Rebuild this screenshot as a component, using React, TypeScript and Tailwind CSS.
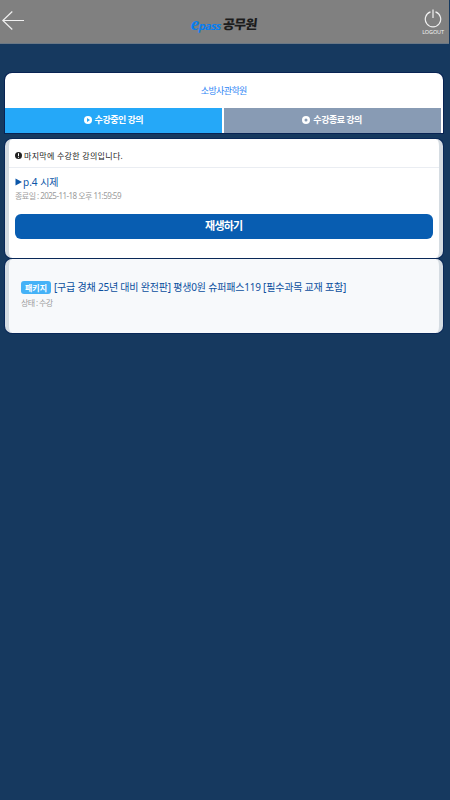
import React, { useState } from 'react';

type Tab = 'ongoing' | 'finished';

interface TabItem {
  id: Tab;
  label: string;
}

const TABS: TabItem[] = [
  { id: 'ongoing', label: '수강중인 강의' },
  { id: 'finished', label: '수강종료 강의' },
];

function TabIcon({ id }: { id: Tab }) {
  return (
    <svg viewBox="0 0 8 8" className="w-2 h-2 shrink-0">
      <circle cx="4" cy="4" r="4" fill="#fff" />
      {id === 'ongoing' ? (
        <path d="M3 2.1 L6 4 L3 5.9 Z" fill="#25a8f8" />
      ) : (
        <circle cx="4" cy="4" r="1.5" fill="#889bb4" />
      )}
    </svg>
  );
}

function Header() {
  return (
    <header className="w-[449px] h-11 bg-[#808080] border-b border-[#6b7885] flex items-start justify-between">
      <button type="button" aria-label="뒤로" className="pt-[11px] pl-[2px] w-[60px]">
        <svg viewBox="0 0 22 19" className="w-[22px] h-[19px]" fill="none" stroke="#f0f0f0" strokeWidth="1.2">
          <path d="M10.3 0.5 L0.8 9.5 L10.3 18.5 M0.8 9.5 H22" />
        </svg>
      </button>
      <div className="flex items-center h-[47px] -ml-px whitespace-nowrap">
        <span className="flex items-baseline h-[19px] leading-[19px] font-['Noto_Sans'] font-bold text-[11px] tracking-[-0.7px] text-[#087ef0]">
          <span className="text-[19px] leading-[19px] italic font-['Liberation_Serif']">e</span>
          <span className="-skew-x-12">pass</span>
        </span>
        <span className="ml-[3px] -skew-x-6 font-['Noto_Sans_CJK_KR'] font-black text-[13px] tracking-[-0.7px] text-[#1c1c1c]">공무원</span>
      </div>
      <button type="button" className="w-[60px] pr-[5px] pt-[9px] flex flex-col items-end">
        <svg viewBox="0 0 18 19" className="w-[18px] h-[19px] mr-[2px]" fill="none" stroke="#f0f0f0" strokeWidth="1.2">
          <path d="M6.5 2.9 A7.7 7.7 0 1 0 11.5 2.9" />
          <path d="M9 0.5 V9" />
        </svg>
        <span className="mt-[1px] h-[6px] leading-[6px] font-['Noto_Sans'] text-[5.5px] tracking-[-0.1px] text-[#f0f0f0]">LOGOUT</span>
      </button>
    </header>
  );
}

export default function App() {
  const [tab, setTab] = useState<Tab>('ongoing');

  return (
    <div className="w-[450px] h-[800px] overflow-hidden bg-[#16395f] font-['Noto_Sans','Noto_Sans_CJK_KR',sans-serif]">
      <Header />

      <main className="mt-[29px] ml-[5px] w-[437.5px] flex flex-col">
        <section className="h-[60px] bg-white rounded-t-[7px] shadow-[0_0_0_1px_#082353] overflow-hidden">
          <h1 className="h-[35px] flex items-center justify-center text-[9px] tracking-[-0.6px] text-[#2e86f5] whitespace-nowrap">
            소방사관학원
          </h1>
          <nav className="flex h-[25px] gap-[2px] pr-[2px]">
            {TABS.map(item => (
              <button
                key={item.id}
                type="button"
                onClick={() => setTab(item.id)}
                className={`flex-1 pb-[2px] flex items-center justify-center gap-[3px] text-white text-[9px] font-bold tracking-[-0.5px] whitespace-nowrap ${item.id === 'ongoing' ? 'bg-[#25a8f8]' : 'bg-[#889bb4]'}`}
                aria-pressed={tab === item.id}
              >
                <TabIcon id={item.id} />
                <span>{item.label}</span>
              </button>
            ))}
          </nav>
        </section>

        <section className="mt-[6px] h-[118.5px] bg-white rounded-[7px] border-x-4 border-[#d5dce2] shadow-[0_0_0_1px_#092858]">
          <div className="h-[29px] pt-[5px] px-[6px] flex items-center gap-[2px] border-b border-[#eaedf2]">
            <svg viewBox="0 0 7 7" className="w-[7px] h-[7px] shrink-0">
              <circle cx="3.5" cy="3.5" r="3.5" fill="#222" />
              <path d="M3.5 1.2 V4 M3.5 4.8 V5.8" stroke="#fff" strokeWidth="1" />
            </svg>
            <span className="text-[8px] tracking-[0.29px] text-[#222] whitespace-nowrap">마지막에 수강한 강의입니다.</span>
          </div>
          <div className="px-[6px] pt-[7px]">
            <div className="flex items-center h-[14px] gap-[1px] text-[#0b56a8]">
              <svg viewBox="0 0 7 8" className="w-[7px] h-2 shrink-0">
                <path d="M0.5 0.5 L7 4 L0.5 7.5 Z" fill="currentColor" />
              </svg>
              <span className="text-[10px] whitespace-nowrap">p.4 시제</span>
            </div>
            <p className="mt-px h-3 leading-3 text-[8px] tracking-[-0.53px] text-[#9b9b9b] whitespace-nowrap">
              종료일 : 2025-11-18 오후 11:59:59
            </p>
          </div>
          <button
            type="button"
            className="mt-[12px] ml-[6px] w-[417.5px] h-[25px] pb-[2px] flex items-center justify-center rounded-[6px] bg-[#085db1] text-white text-[11px] font-bold font-['Noto_Sans_CJK_KR',sans-serif] tracking-[-0.8px]"
          >
            재생하기
          </button>
        </section>

        <section className="mt-[1px] h-[74px] bg-[#f7f9fb] rounded-[7px] border-x-4 border-[#d5dce2] shadow-[0_0_0_1px_#092858] pt-[22px] pl-3">
          <div className="flex items-center h-[14px] gap-[3px]">
            <span className="w-[30px] h-[13px] flex items-center justify-center rounded-[3px] bg-[#45b2f7] text-white text-[8px] font-bold whitespace-nowrap">
              패키지
            </span>
            <span className="text-[10px] tracking-[-0.2px] text-[#0b4f9e] whitespace-nowrap">
              [구급 경채 25년 대비 완전판] 평생0원 슈퍼패스119 [필수과목 교재 포함]
            </span>
          </div>
          <p className="mt-[2px] h-3 leading-3 text-[8px] tracking-[-0.6px] text-[#9b9b9b] whitespace-nowrap">상태 : 수강</p>
        </section>
      </main>
    </div>
  );
}
